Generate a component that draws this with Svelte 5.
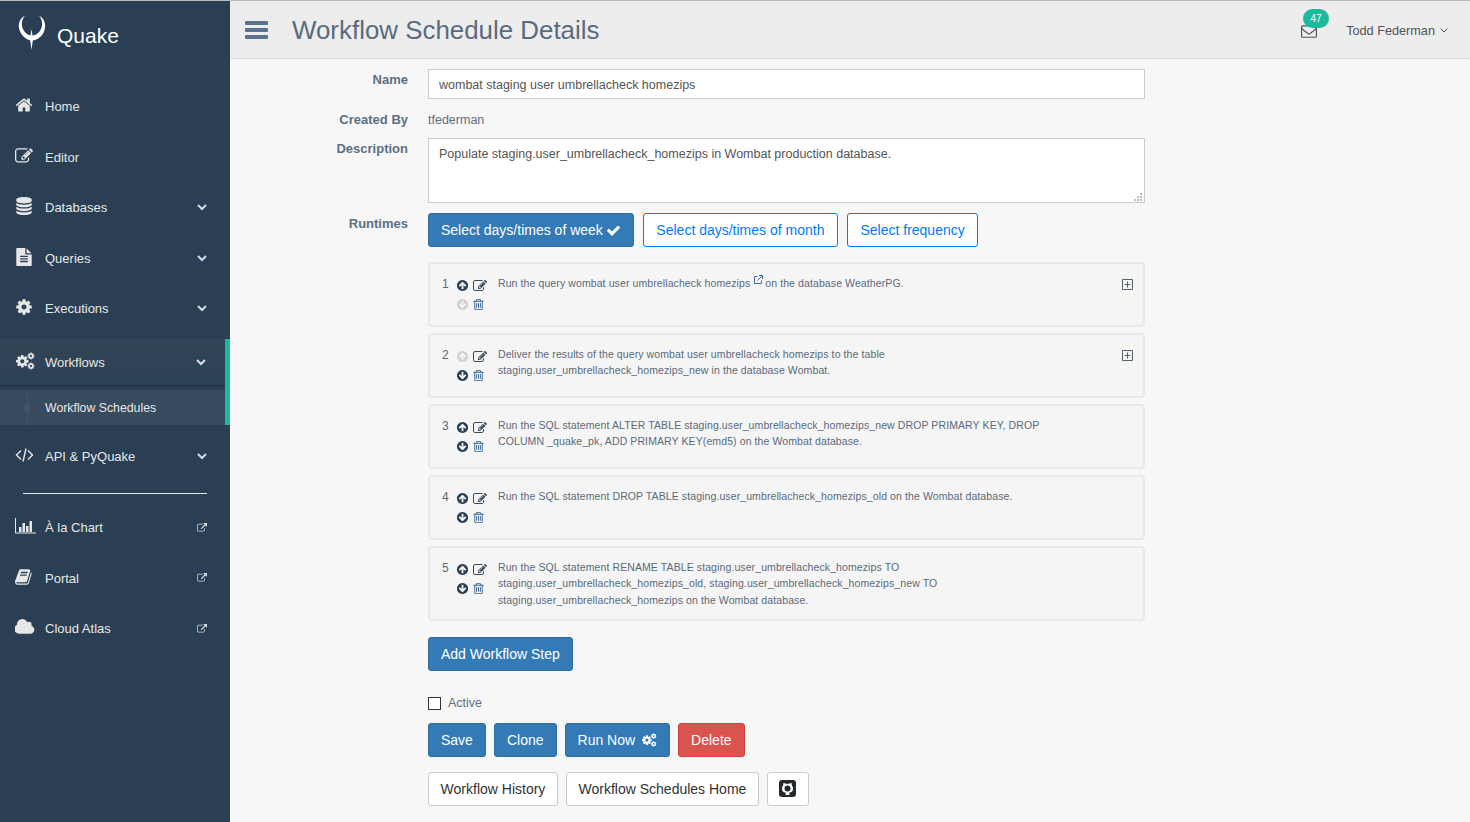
<script>
  const paths = {
    home: 'M1472 992v480q0 26-19 45t-45 19h-384v-384h-256v384h-384q-26 0-45-19t-19-45v-480q0-1 .5-3t.5-3l575-474 575 474q1 2 1 6zm223-69l-62 74q-8 9-21 11h-3q-13 0-21-7l-692-577-692 577q-12 8-24 7-13-2-21-11l-62-74q-8-10-7-23.500t11-21.500l719-599q32-26 76-26t76 26l244 204v-195q0-14 9-23t23-9h192q14 0 23 9t9 23v408l219 182q10 8 11 21.500t-7 23.500z',
    edit: 'M888 1184l116-116-152-152-116 116v56h96v96h56zm440-720q-16-16-33 1l-350 350q-17 17-1 33t33-1l350-350q17-17 1-33zm80 594v190q0 119-84.500 203.500t-203.500 84.500h-832q-119 0-203.500-84.500t-84.500-203.500v-832q0-119 84.500-203.500t203.500-84.500h832q63 0 117 25 15 7 18 23 3 17-9 29l-49 49q-14 14-32 8-23-6-45-6h-832q-66 0-113 47t-47 113v832q0 66 47 113t113 47h832q66 0 113-47t47-113v-126q0-13 9-22l64-64q15-15 35-7t20 29zm-96-738l288 288-672 672h-288v-288zm444 132l-92 92-288-288 92-92q28-28 68-28t68 28l152 152q28 28 28 68t-28 68z',
    database: 'M896 768q237 0 443-43t325-127v170q0 69-103 128t-280 93.500-385 34.500-385-34.500-280-93.500-103-128v-170q119 84 325 127t443 43zm0 768q237 0 443-43t325-127v170q0 69-103 128t-280 93.500-385 34.500-385-34.500-280-93.500-103-128v-170q119 84 325 127t443 43zm0-384q237 0 443-43t325-127v170q0 69-103 128t-280 93.500-385 34.500-385-34.500-280-93.500-103-128v-170q119 84 325 127t443 43zm0-1152q208 0 385 34.500t280 93.500 103 128v128q0 69-103 128t-280 93.500-385 34.500-385-34.500-280-93.500-103-128v-128q0-69 103-128t280-93.500 385-34.500z',
    file: 'M1596 476q14 14 28 36h-472v-472q22 14 36 28zm-476 164h544v1056q0 40-28 68t-68 28h-1344q-40 0-68-28t-28-68v-1600q0-40 28-68t68-28h800v544q0 40 28 68t68 28zm160 736v-64q0-14-9-23t-23-9h-704q-14 0-23 9t-9 23v64q0 14 9 23t23 9h704q14 0 23-9t9-23zm0-256v-64q0-14-9-23t-23-9h-704q-14 0-23 9t-9 23v64q0 14 9 23t23 9h704q14 0 23-9t9-23zm0-256v-64q0-14-9-23t-23-9h-704q-14 0-23 9t-9 23v64q0 14 9 23t23 9h704q14 0 23-9t9-23z',
    cog: 'M1152 896q0-106-75-181t-181-75-181 75-75 181 75 181 181 75 181-75 75-181zm512-109v222q0 12-8 23t-20 13l-185 28q-19 54-39 91 35 50 107 138 10 12 10 25t-9 23q-27 37-99 108t-94 71q-12 0-26-9l-138-108q-44 23-91 38-16 136-29 186-7 28-36 28h-222q-14 0-24.500-8.500t-11.500-21.500l-28-184q-49-16-90-37l-141 107q-10 9-25 9-14 0-25-11-126-114-165-168-7-10-7-23 0-12 8-23 15-21 51-66.500t54-70.500q-27-50-41-99l-183-27q-13-2-21-12.500t-8-23.500v-222q0-12 8-23t19-13l186-28q14-46 39-92-40-57-107-138-10-12-10-24 0-10 9-23 26-36 98.500-107.500t94.500-71.500q13 0 26 10l138 107q44-23 91-38 16-136 29-186 7-28 36-28h222q14 0 24.500 8.500t11.500 21.500l28 184q49 16 90 37l142-107q9-9 24-9 13 0 25 10 129 119 165 170 7 8 7 22 0 12-8 23-15 21-51 66.500t-54 70.500q26 50 41 98l183 28q13 2 21 12.500t8 23.500z',
    book: 'M1639 478q40 57 18 129l-275 906q-19 64-76.500 107.500t-122.500 43.500h-923q-77 0-148.500-53.500t-99.500-131.500q-24-67-2-127 0-4 3-27t4-37q1-8-3-21.500t-3-19.500q2-11 8-21t16.500-23.500 16.500-23.500q23-38 45-91.500t30-91.500q3-10 .5-30t-.5-28q3-11 17-28t17-23q21-36 42-92t25-90q1-9-2.500-32t.5-28q4-13 22-30.500t22-22.500q19-26 42.500-84.500t27.500-96.500q1-8-3-25.500t-2-26.500q2-8 9-18t18-23 17-21q8-12 16.500-30.500t15-35 16-36 19.500-32 26.500-23.500 36-11.500 47.500 5.500l-1 3q38-9 51-9h761q74 0 114 56t18 130l-274 906q-36 119-71.500 153.500t-128.500 34.500h-869q-27 0-38 15-11 16-1 43 24 70 144 70h923q29 0 56-15.500t35-41.500l300-987q7-22 5-57 38 15 59 43zm-1064 2q-4 13 2 22.500t20 9.500h608q13 0 25.500-9.500t16.500-22.500l21-64q4-13-2-22.500t-20-9.500h-608q-13 0-25.500 9.500t-16.500 22.500zm-83 256q-4 13 2 22.500t20 9.500h608q13 0 25.500-9.500t16.500-22.500l21-64q4-13-2-22.500t-20-9.500h-608q-13 0-25.500 9.500t-16.500 22.500z',
    cloud: 'M1856 1152q0 159-112.500 271.500t-271.500 112.500h-1088q-185 0-316.500-131.500t-131.500-316.500q0-132 71-241.500t187-163.500q-2-28-2-43 0-212 150-362t362-150q158 0 286.500 88t187.500 230q70-62 166-62 106 0 181 75t75 181q0 75-41 138 129 30 213 134.500t84 239.500z',
    link: 'M1408 928v320q0 119-84.500 203.500t-203.500 84.500h-832q-119 0-203.500-84.500t-84.500-203.500v-832q0-119 84.500-203.500t203.500-84.500h704q14 0 23 9t9 23v64q0 14-9 23t-23 9h-704q-66 0-113 47t-47 113v832q0 66 47 113t113 47h832q66 0 113-47t47-113v-320q0-14 9-23t23-9h64q14 0 23 9t9 23zm384-864v512q0 26-19 45t-45 19-45-19l-176-176-652 652q-10 10-23 10t-23-10l-114-114q-10-10-10-23t10-23l652-652-176-176q-19-19-19-45t19-45 45-19h512q26 0 45 19t19 45z',
    circle: 'M1412 895q0-27-18-45l-362-362-91-91q-18-18-45-18t-45 18l-91 91-362 362q-18 18-18 45t18 45l91 91q18 18 45 18t45-18l189-189v502q0 26 19 45t45 19h128q26 0 45-19t19-45v-502l189 189q19 19 45 19t45-19l91-91q18-18 18-45zm252 1q0 209-103 385.500t-279.500 279.500-385.500 103-385.500-103-279.500-279.500-103-385.500 103-385.500 279.500-279.500 385.500-103 385.500 103 279.500 279.500 103 385.500z',
    trash: 'M704 736v576q0 14-9 23t-23 9h-64q-14 0-23-9t-9-23v-576q0-14 9-23t23-9h64q14 0 23 9t9 23zm256 0v576q0 14-9 23t-23 9h-64q-14 0-23-9t-9-23v-576q0-14 9-23t23-9h64q14 0 23 9t9 23zm256 0v576q0 14-9 23t-23 9h-64q-14 0-23-9t-9-23v-576q0-14 9-23t23-9h64q14 0 23 9t9 23zm128 724v-948h-896v948q0 22 7 40.500t14.500 27 10.500 8.500h832q3 0 10.500-8.500t14.500-27 7-40.500zm-672-1076h448l-48-117q-7-9-17-11h-317q-10 2-17 11zm928 32v64q0 14-9 23t-23 9h-96v948q0 83-47 143.500t-113 60.500h-832q-66 0-113-58.500t-47-141.500v-952h-96q-14 0-23-9t-9-23v-64q0-14 9-23t23-9h309l70-167q15-37 54-63t79-26h320q40 0 79 26t54 63l70 167h309q14 0 23 9t9 23z',
    check: 'M1671 566q0 40-28 68l-724 724-136 136q-28 28-68 28t-68-28l-136-136-362-362q-28-28-28-68t28-68l136-136q28-28 68-28t68 28l294 295 656-657q28-28 68-28t68 28l136 136q28 28 28 68z',
    envelope: 'M1664 1504v-768q-32 36-69 66-268 206-426 338-51 43-83 67t-86.500 48.500-102.500 24.500h-2q-48 0-102.500-24.500t-86.500-48.500-83-67q-158-132-426-338-37-30-69-66v768q0 13 9.500 22.500t22.500 9.500h1472q13 0 22.500-9.500t9.500-22.500zm0-1051v-24.500l-.5-13-3-12.500-5.500-9-9-7.500-14-2.500h-1472q-13 0-22.500 9.500t-9.500 22.500q0 168 147 284 193 152 401 317 6 5 35 29.500t46 37.500 44.500 31.500 50.500 27.500 43 9h2q20 0 43-9t50.500-27.500 44.500-31.500 46-37.500 35-29.500q208-165 401-317 54-43 100.500-115.500t46.500-131.500zm128-37v1088q0 66-47 113t-113 47h-1472q-66 0-113-47t-47-113v-1088q0-66 47-113t113-47h1472q66 0 113 47t47 113z'
  };

  const topItems = [
    { label: 'Home', icon: 'home' },
    { label: 'Editor', icon: 'edit' },
    { label: 'Databases', icon: 'database', more: true },
    { label: 'Queries', icon: 'file', more: true },
    { label: 'Executions', icon: 'cog', more: true }
  ];
  const outItems = [
    { label: 'À la Chart', icon: 'chart' },
    { label: 'Portal', icon: 'book' },
    { label: 'Cloud Atlas', icon: 'cloud' }
  ];

  const name = 'wombat staging user umbrellacheck homezips';
  const description = 'Populate staging.user_umbrellacheck_homezips in Wombat production database.';

  const steps = [
    { up: true, down: false, expand: true, lines: null },
    { up: false, down: true, expand: true, lines: ['Deliver the results of the query wombat user umbrellacheck homezips to the table', 'staging.user_umbrellacheck_homezips_new in the database Wombat.'] },
    { up: true, down: true, lines: ['Run the SQL statement ALTER TABLE staging.user_umbrellacheck_homezips_new DROP PRIMARY KEY, DROP', 'COLUMN _quake_pk, ADD PRIMARY KEY(emd5) on the Wombat database.'] },
    { up: true, down: true, lines: ['Run the SQL statement DROP TABLE staging.user_umbrellacheck_homezips_old on the Wombat database.'] },
    { up: true, down: true, lines: ['Run the SQL statement RENAME TABLE staging.user_umbrellacheck_homezips TO', 'staging.user_umbrellacheck_homezips_old, staging.user_umbrellacheck_homezips_new TO', 'staging.user_umbrellacheck_homezips on the Wombat database.'] }
  ];
</script>

{#snippet icon(name, size, cls = '')}
  <svg class={cls} width={size} height={size} viewBox={name === 'cloud' ? '0 0 1920 1792' : '0 0 1792 1792'} fill="currentColor" aria-hidden="true">
    <path d={paths[name]} />
  </svg>
{/snippet}

{#snippet cogs(w, h)}
  <svg width={w} height={h} viewBox="0 0 20 18" fill="currentColor" aria-hidden="true">
    <svg x="0" y="2" width="14.500" height="14.500" viewBox="0 0 1792 1792"><path d={paths.cog} /></svg>
    <svg x="12" y="0" width="8" height="8" viewBox="0 0 1792 1792"><path d={paths.cog} /></svg>
    <svg x="12" y="10" width="8" height="8" viewBox="0 0 1792 1792"><path d={paths.cog} /></svg>
  </svg>
{/snippet}

{#snippet chevron()}
  <svg class="chev" width="10" height="7" viewBox="0 0 10 7" fill="none" stroke="currentColor" stroke-width="2"><path d="M1 1l4 4 4-4" /></svg>
{/snippet}

{#snippet arrow(dir, on)}
  <svg class={on ? 'arrow' : 'arrow off'} class:down={dir === 'down'} width="13" height="13" viewBox="0 0 1792 1792" fill="currentColor"><path d={paths.circle} /></svg>
{/snippet}

<div class="topline"></div>
<div class="page">
  <aside class="sidebar">
    <div class="brand">
      <svg width="30" height="36" viewBox="0 0 30 36" fill="#fff" aria-hidden="true">
        <path d="M8 .5C2 4 .8 10 2.500 15 4.500 21 10 25.500 15 25.500 20 25.500 26 21 27.500 15 29.200 10 28 4 22 .5 25.500 5 26 10 24 14 22 18.500 18 20.500 15 20.500 12 20.500 8 18.500 6 14 4 10 4.500 5 8 .5Z" />
        <path d="M14.500 14L16 24 14.500 35 13 24Z" />
      </svg>
      <span>Quake</span>
    </div>

    <ul class="menu">
      {#each topItems as item}
        <li>
          <span class="ico">{@render icon(item.icon, 18)}</span>
          <span class="label">{item.label}</span>
          {#if item.more}{@render chevron()}{/if}
        </li>
      {/each}
    </ul>

    <div class="active-group">
      <div class="active-head">
        <span class="ico">{@render cogs(20, 18)}</span>
        <span class="label">Workflows</span>
        {@render chevron()}
      </div>
      <div class="child">
        <span class="label">Workflow Schedules</span>
      </div>
    </div>

    <ul class="menu api">
      <li>
        <span class="ico">
          <svg width="19" height="14" viewBox="0 0 19 14" fill="none" stroke="currentColor" stroke-width="1.400"><path d="M6 2.500L1.500 7 6 11.500M13 2.500L17.500 7 13 11.500M11 .5L8 13.500" /></svg>
        </span>
        <span class="label">API &amp; PyQuake</span>
        {@render chevron()}
      </li>
    </ul>

    <hr />

    <ul class="menu">
      {#each outItems as item}
        <li>
          <span class="ico">
            {#if item.icon === 'chart'}
              <svg width="21" height="16" viewBox="0 0 21 16" fill="currentColor"><path d="M0 0h1v14.500h20.500v1H0zM4 9h2.500v5H4zM7.500 5H10v9H7.500zM11 8h2.500v6H11zM14.500 3H17v11h-2.500z" /></svg>
            {:else}
              {@render icon(item.icon, item.icon === 'cloud' ? 20 : 18)}
            {/if}
          </span>
          <span class="label">{item.label}</span>
          {@render icon('link', 10, 'ext')}
        </li>
      {/each}
    </ul>
  </aside>

  <div class="right">
    <header class="topbar">
      <div class="bars"><i></i><i></i><i></i></div>
      <h1>Workflow Schedule Details</h1>
      <div class="user">
        <div class="mail">
          {@render icon('envelope', 16)}
          <span class="badge">47</span>
        </div>
        <span class="username">Todd Federman</span>
        <svg width="8" height="5" viewBox="0 0 8 5" fill="none" stroke="currentColor"><path d="M.5.5L4 4 7.500.5" /></svg>
      </div>
    </header>

    <main class="content">
      <div class="form">
        <div class="lbl lbl-name">Name</div>
        <input class="field" type="text" value={name} />

        <div class="lbl lbl-by">Created By</div>
        <div class="plain">tfederman</div>

        <div class="lbl lbl-desc">Description</div>
        <div class="area-wrap">
          <textarea class="field area" value={description}></textarea>
          <svg class="grip" width="9" height="9" viewBox="0 0 9 9" fill="#bdbdbd"><path d="M6 0h2v2H6zM3 3h2v2H3zM6 3h2v2H6zM0 6h2v2H0zM3 6h2v2H3zM6 6h2v2H6z" /></svg>
        </div>

        <div class="lbl lbl-run">Runtimes</div>
        <div class="btns">
          <button class="btn primary">Select days/times of week {@render icon('check', 15, 'chk')}</button>
          <button class="btn outline">Select days/times of month</button>
          <button class="btn outline">Select frequency</button>
        </div>

        <div></div>
        <div class="steps">
          {#each steps as step, i}
            <div class="well">
              <div class="num">{i + 1}</div>
              <div class="tools">
                {@render arrow('up', step.up)}
                {@render icon('edit', 14, 'tool')}
                {@render arrow('down', step.down)}
                {@render icon('trash', 13, 'bin')}
              </div>
              <div class="desc">
                {#if step.lines}
                  {#each step.lines as line}<div>{line}</div>{/each}
                {:else}
                  <div>Run the query wombat user umbrellacheck homezips<sup><svg width="9" height="9" viewBox="0 0 9 9" fill="none" stroke="#3f6f9f"><path d="M3.500 1.500H.5v7h7v-3M5 .5h3.500V4M8 1L3.500 5.500" /></svg></sup>on the database WeatherPG.</div>
                {/if}
              </div>
              {#if step.expand}
                <svg class="plus" width="11" height="11" viewBox="0 0 11 11" fill="none" stroke="#55606e"><path d="M.5.5h10v10H.5zM5.500 2.500v6M2.500 5.500h6" /></svg>
              {/if}
            </div>
          {/each}
        </div>

        <div></div>
        <div class="after">
          <button class="btn primary">Add Workflow Step</button>
          <label class="active"><input type="checkbox" /> Active</label>
          <div class="btns">
            <button class="btn primary">Save</button>
            <button class="btn primary">Clone</button>
            <button class="btn primary">Run Now <span class="runcogs">{@render cogs(16, 14)}</span></button>
            <button class="btn danger">Delete</button>
          </div>
          <div class="btns links">
            <button class="btn plainbtn">Workflow History</button>
            <button class="btn plainbtn">Workflow Schedules Home</button>
            <button class="btn plainbtn gh" aria-label="GitHub">
              <svg width="17" height="17" viewBox="0 0 17 17">
                <rect width="17" height="17" rx="3" fill="#24292e" />
                <path d="M4.500 2.800L6.800 3.800h3.400l2.300-1 .4 2.700q1.100 1.200 1.100 2.900 0 3.700-3.600 4.200V15H6.600v-2.400Q3 12.100 3 8.400q0-1.700 1.100-2.900z" fill="#fff" />
                <circle cx="8.500" cy="8.500" r="3" fill="#24292e" />
              </svg>
            </button>
          </div>
        </div>
      </div>
    </main>
  </div>
</div>

<style>
  :global(body) {
    margin: 0;
    background: #f7f7f7;
    font-family: "Liberation Sans", Arial, sans-serif;
    font-size: 13px;
    color: #5d6f82;
  }

  .topline {
    height: 1px;
    background: #bdbdbd;
  }

  .page {
    display: flex;
    min-height: 821px;
  }

  /* sidebar */
  .sidebar {
    width: 230px;
    flex: none;
    background: #2a3f54;
    color: #e7e7e7;
  }

  .brand {
    height: 80.400px;
    display: flex;
    align-items: flex-start;
    color: #fff;
    font-size: 21px;
    padding-left: 17px;
    box-sizing: border-box;
  }

  .brand svg {
    margin-top: 14px;
  }

  .brand span {
    margin: 21px 0 0 10px;
    line-height: 28px;
  }

  .menu {
    list-style: none;
    margin: 0;
    padding: 0;
  }

  .menu li,
  .active-head {
    display: flex;
    align-items: center;
    height: 50.500px;
    padding: 0 23px 0 15px;
    box-sizing: border-box;
  }

  .ico {
    width: 30px;
    flex: none;
    display: flex;
    align-items: center;
    margin-top: -3px;
  }

  .label {
    flex: 1;
  }

  .chev {
    color: #d5dbe2;
  }

  :global(.ext) {
    color: #d5dbe2;
  }

  .active-group {
    margin-top: 5.500px;
    border-right: 5px solid #1abb9c;
    box-shadow: inset 0 1px 0 rgba(255, 255, 255, 0.16);
  }

  .active-head {
    height: 46px;
    padding-right: 19px;
    background: linear-gradient(#334556, #2c4257);
    box-shadow: 0 1px 0 rgba(0, 0, 0, 0.25);
  }

  .child {
    position: relative;
    margin-top: 5px;
    height: 35px;
    display: flex;
    align-items: center;
    padding-left: 45px;
    font-size: 12.300px;
    color: rgba(255, 255, 255, 0.9);
    background: #374a5e;
  }

  .child::before {
    content: "";
    position: absolute;
    left: 27px;
    top: 0;
    bottom: 0;
    width: 1px;
    background: #425668;
  }

  .child::after {
    content: "";
    position: absolute;
    left: 23px;
    top: 14px;
    width: 8px;
    height: 8px;
    border-radius: 50%;
    background: #425668;
  }

  .api {
    margin-top: 5.600px;
  }

  .sidebar hr {
    border: 0;
    height: 1px;
    background: #e7e7e7;
    margin: 12px 23px 8px;
  }

  /* header */
  .right {
    flex: 1;
    min-width: 0;
  }

  .topbar {
    height: 57px;
    display: flex;
    align-items: center;
    background: #ededed;
    border-bottom: 1px solid #d9dee4;
    padding: 0 22px 0 15px;
  }

  .bars {
    display: flex;
    flex-direction: column;
    gap: 3px;
    width: 23px;
  }

  .bars i {
    height: 4px;
    border-radius: 1px;
    background: #5a738e;
  }

  h1 {
    margin: 0 0 0 24px;
    padding-top: 2px;
    flex: 1;
    font-size: 25.900px;
    font-weight: 400;
    color: #596b7d;
  }

  .user {
    display: flex;
    align-items: center;
    color: #515356;
    font-size: 12.700px;
    padding-top: 2px;
  }

  .mail {
    position: relative;
    display: flex;
    margin-right: 29px;
  }

  .badge {
    position: absolute;
    left: 2px;
    top: -14px;
    width: 26px;
    height: 19px;
    border-radius: 10px;
    background: #1abb9c;
    color: #fff;
    font-size: 10px;
    line-height: 19px;
    text-align: center;
  }

  .username {
    margin-right: 5px;
  }

  /* form */
  .content {
    padding-top: 10px;
  }

  .form {
    display: grid;
    grid-template-columns: 178px 717px;
    column-gap: 20px;
    font-size: 12.500px;
  }

  .lbl {
    text-align: right;
    font-size: 13px;
    font-weight: 700;
  }

  .lbl-name { padding-top: 3px; }
  .lbl-by { padding-top: 13px; }
  .lbl-desc { padding-top: 3px; }
  .lbl-run { padding-top: 3px; }

  .field {
    box-sizing: border-box;
    width: 100%;
    height: 30px;
    padding: 2px 10px 0;
    border: 1px solid #ccc;
    background: #fff;
    color: #555;
    font: inherit;
    margin: 0;
    border-radius: 0;
  }

  .area-wrap {
    position: relative;
    height: 65px;
    margin-bottom: 10px;
  }

  .area {
    height: 65px;
    padding: 6px 10px;
    line-height: 18px;
    display: block;
    resize: none;
  }

  .grip {
    position: absolute;
    right: 2px;
    bottom: 1px;
  }

  .plain {
    padding: 13px 0 9px;
    line-height: 17px;
  }

  .btns {
    display: flex;
    gap: 8px;
  }

  .btn {
    height: 34px;
    padding: 0 12px;
    border: 1px solid transparent;
    border-radius: 3px;
    font-family: inherit;
    font-size: 14px;
    line-height: 20px;
    display: inline-flex;
    align-items: center;
    white-space: nowrap;
  }

  .primary { background: #337ab7; border-color: #2e6da4; color: #fff; }
  .danger { background: #d9534f; border-color: #d43f3a; color: #fff; }
  .outline { background: #fff; border-color: #007bff; color: #007bff; padding: 0 12.500px; }
  .plainbtn { background: #fff; border-color: #ccc; color: #333; padding: 0 11.600px; }
  .gh { padding: 0 11.500px; }

  .form > .btns {
    gap: 9px;
  }

  :global(.chk) {
    margin-left: 3px;
  }

  .runcogs {
    display: flex;
    margin-left: 6px;
  }

  /* workflow steps */
  .steps {
    margin-top: 15px;
    display: flex;
    flex-direction: column;
    gap: 6px;
  }

  .well {
    position: relative;
    display: flex;
    box-sizing: border-box;
    min-height: 65px;
    padding: 12px 10px 11px 12px;
    background: #f5f5f5;
    border: 2px solid #e9e9e9;
    border-radius: 4px;
    font-size: 10.500px;
    letter-spacing: 0.1px;
    line-height: 16.300px;
  }

  .num {
    width: 14px;
    margin-top: 1px;
    font-size: 12px;
    letter-spacing: 0;
    line-height: 14px;
    color: #5a6a7a;
  }

  .tools {
    display: grid;
    grid-template-columns: 13px 15px;
    grid-auto-rows: 19px;
    column-gap: 3px;
    align-items: center;
    justify-items: center;
    margin: 0 11px 0 0;
    align-self: flex-start;
    color: #3a4a5c;
  }

  .arrow {
    color: #2a3f54;
  }

  .arrow.off {
    color: #d0d0d0;
  }

  .arrow.down {
    transform: rotate(180deg);
  }

  .tools :global(.bin) {
    color: #34618f;
    justify-self: start;
  }

  .desc {
    flex: 1;
    color: #5a6a7a;
    margin-top: -1px;
  }

  sup {
    line-height: 0;
    vertical-align: 3px;
    margin: 0 2px 0 4px;
  }

  .plus {
    position: absolute;
    right: 10px;
    top: 15px;
  }

  .after {
    display: flex;
    flex-direction: column;
    align-items: flex-start;
    padding-top: 16px;
  }

  .active {
    display: flex;
    align-items: center;
    margin: 22px 0 10px;
    height: 20px;
    font-size: 12.500px;
    gap: 7px;
  }

  .active input {
    appearance: none;
    width: 13px;
    height: 13px;
    margin: 1px 0 0;
    border: 1px solid #333;
    background: #fff;
  }

  .links {
    margin-top: 15px;
  }
</style>
